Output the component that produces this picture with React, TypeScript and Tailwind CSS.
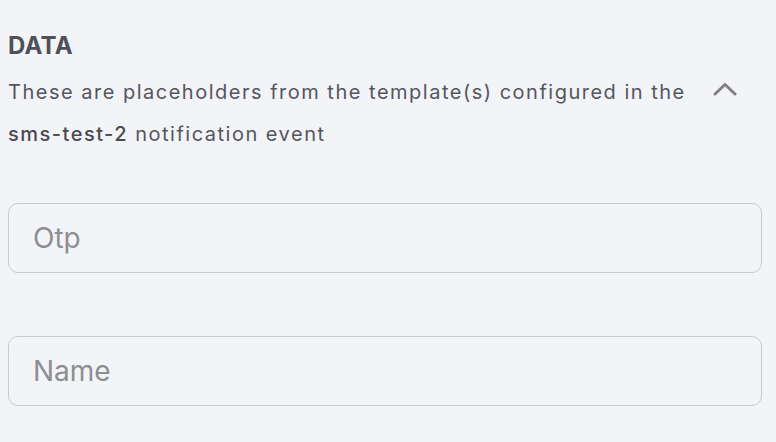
import React from "react";

export default function App() {
  return (
    <div className="min-h-[442px] w-[776px] bg-[#f3f4f8] font-['Inter',sans-serif]">
      <div className="pl-2 pr-[14px] pt-[31px]">
        <h2 className="text-[24px] font-bold leading-[30px] tracking-[0.01em] text-[#505058]">DATA</h2>
        <div className="mt-[10px] flex items-start justify-between">
          <p className="w-[690px] text-[20px] leading-[42px] tracking-[0.075em] text-[#55555e]">
            These are placeholders from the template(s) configured in the{" "}
            <span className="font-medium text-[#4a4a52]">sms-test-2</span> notification event
          </p>
          <button className="mr-[24px] mt-[8px] flex h-[20px] w-[26px] items-center justify-center text-[#808080]">
            <svg width="24" height="14" viewBox="0 0 24 14" fill="none">
              <path d="M2 12 L12 2.5 L22 12" stroke="currentColor" strokeWidth="3" strokeLinecap="round" strokeLinejoin="round" />
            </svg>
          </button>
        </div>
        <div className="mt-[48px] flex flex-col gap-[63px]">
          <input
            placeholder="Otp"
            className="h-[70px] w-[754px] rounded-[10px] border border-[#c9c9ce] bg-transparent px-6 text-[28px] text-[#333] outline-none placeholder:text-[#8d8d92]"
          />
          <input
            placeholder="Name"
            className="h-[70px] w-[754px] rounded-[10px] border border-[#c9c9ce] bg-transparent px-6 text-[28px] text-[#333] outline-none placeholder:text-[#8d8d92]"
          />
        </div>
      </div>
    </div>
  );
}
